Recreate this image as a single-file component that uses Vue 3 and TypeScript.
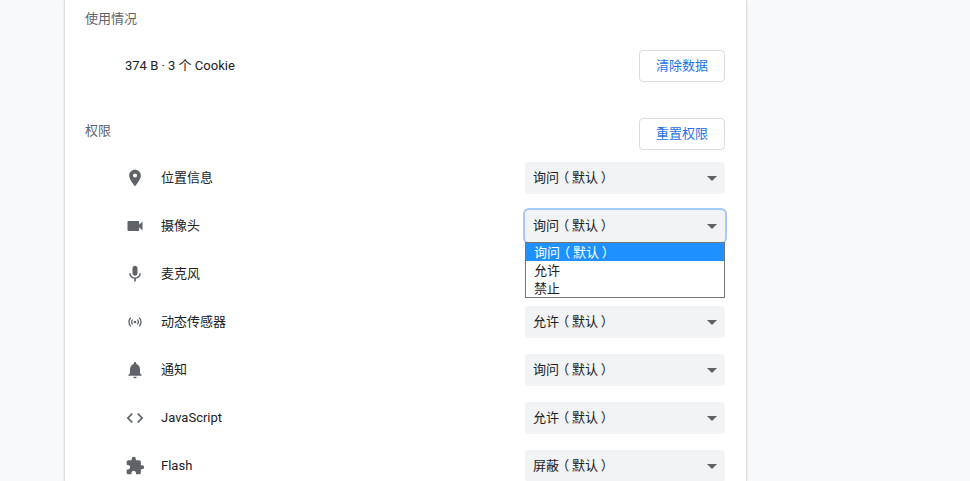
<script setup lang="ts">
interface Perm { name: string; value: string; icon: string; open?: boolean; small?: boolean; covered?: boolean }
const perms: Perm[] = [
  { name: '位置信息', value: '询问', icon: 'M12 2C8.13 2 5 5.13 5 9c0 5.25 7 13 7 13s7-7.75 7-13c0-3.87-3.13-7-7-7zm0 9.5a2.5 2.5 0 0 1 0-5 2.5 2.5 0 0 1 0 5z' },
  { name: '摄像头', value: '询问', open: true, icon: 'M17 10.5V7c0-.55-.45-1-1-1H4c-.55 0-1 .45-1 1v10c0 .55.45 1 1 1h12c.55 0 1-.45 1-1v-3.5l4 4v-11l-4 4z' },
  { name: '麦克风', value: '询问', covered: true, icon: 'M12 14c1.66 0 2.99-1.34 2.99-3L15 5c0-1.66-1.34-3-3-3S9 3.34 9 5v6c0 1.66 1.34 3 3 3zm5.3-3c0 3-2.54 5.1-5.3 5.1S6.7 14 6.7 11H5c0 3.41 2.72 6.23 6 6.72V21h2v-3.28c3.28-.48 6-3.3 6-6.72h-1.7z' },
  { name: '动态传感器', value: '允许', small: true, icon: 'M12 10a2 2 0 1 0 0 4 2 2 0 0 0 0-4zM7.76 16.24A5.98 5.98 0 0 1 6 12c0-1.66.67-3.16 1.76-4.24l1.42 1.42A3.96 3.96 0 0 0 8 12c0 1.1.45 2.1 1.17 2.83l-1.41 1.41zm8.48 0l-1.41-1.41A3.96 3.96 0 0 0 16 12c0-1.1-.45-2.1-1.17-2.83l1.41-1.41A5.98 5.98 0 0 1 18 12c0 1.66-.67 3.16-1.76 4.24zM4.93 19.07A9.97 9.97 0 0 1 2 12c0-2.76 1.12-5.26 2.93-7.07l1.42 1.42A7.97 7.97 0 0 0 4 12c0 2.21.9 4.21 2.35 5.65l-1.42 1.42zm14.14 0l-1.42-1.42A7.97 7.97 0 0 0 20 12c0-2.21-.9-4.21-2.35-5.65l1.42-1.42A9.97 9.97 0 0 1 22 12c0 2.76-1.12 5.26-2.93 7.07z' },
  { name: '通知', value: '询问', icon: 'M12 22c1.1 0 2-.9 2-2h-4c0 1.1.9 2 2 2zm6-6v-5c0-3.07-1.63-5.64-4.5-6.32V4c0-.83-.67-1.5-1.5-1.5s-1.5.67-1.5 1.5v.68C7.64 5.36 6 7.92 6 11v5l-2 2v1h16v-1l-2-2z' },
  { name: 'JavaScript', value: '允许', icon: 'M9.4 16.6L4.8 12l4.6-4.6L8 6l-6 6 6 6 1.4-1.4zm5.2 0l4.6-4.6-4.6-4.6L16 6l6 6-6 6-1.4-1.4z' },
  { name: 'Flash', value: '屏蔽', icon: 'M20.5 11H19V7c0-1.1-.9-2-2-2h-4V3.5a2.5 2.5 0 0 0-5 0V5H4c-1.1 0-1.99.9-1.99 2v3.8H3.5c1.49 0 2.7 1.21 2.7 2.7s-1.21 2.7-2.7 2.7H2V20c0 1.1.9 2 2 2h3.8v-1.5c0-1.49 1.21-2.7 2.7-2.7s2.7 1.21 2.7 2.7V22H17c1.1 0 2-.9 2-2v-4h1.5a2.5 2.5 0 0 0 0-5z' },
]
</script>

<template>
  <div class="page">
    <main class="card">
      <h2 class="heading usage-heading">使用情况</h2>
      <div class="usage">
        <span>374 B · 3 个 Cookie</span>
        <button class="btn">清除数据</button>
      </div>
      <div class="perm-head">
        <h2 class="heading">权限</h2>
        <button class="btn">重置权限</button>
      </div>
      <div v-for="p in perms" :key="p.name" class="row">
        <svg class="icon" :class="{ small: p.small }" viewBox="0 0 24 24"><path :d="p.icon" /></svg>
        <span class="label">{{ p.name }}</span>
        <div class="select-wrap">
          <div v-if="!p.covered" class="select" :class="{ focused: p.open }">
            <span>{{ p.value }}<span class="paren">（</span>默认<span class="paren">）</span></span>
            <i class="arrow"></i>
          </div>
          <ul v-if="p.open" class="menu">
            <li class="active">询问<span class="paren">（</span>默认<span class="paren">）</span></li>
            <li>允许</li>
            <li>禁止</li>
          </ul>
        </div>
      </div>
    </main>
  </div>
</template>

<style>
html, body { margin: 0; overflow: hidden; }
</style>

<style scoped>
.page {
  height: 481px;
  overflow: hidden;
  background: #f8f9fa;
  font: 13px/20px Roboto, "Noto Sans CJK SC", sans-serif;
  color: #202124;
}
.card {
  box-sizing: border-box;
  width: 681px;
  margin-left: 65px;
  height: 481px;
  padding: 0 21px 0 20px;
  background: #fff;
  box-shadow: 0 0 2px rgba(60, 64, 67, .3), 0 1px 3px rgba(60, 64, 67, .15);
}
.heading {
  margin: 0;
  font-size: 13px;
  font-weight: 400;
  color: #5f6368;
  line-height: 20px;
}
.usage-heading { padding-top: 9px; }
.usage {
  display: flex;
  align-items: center;
  justify-content: space-between;
  margin-top: 21px;
  padding-left: 40px;
}
.perm-head {
  display: flex;
  justify-content: space-between;
  align-items: flex-start;
  margin-top: 36px;
  margin-bottom: 4px;
}
.perm-head .heading { margin-top: 3px; }
.btn {
  box-sizing: border-box;
  width: 86px;
  height: 32px;
  padding: 0;
  font: inherit;
  color: #1a73e8;
  background: #fff;
  border: 1px solid #dadce0;
  border-radius: 4px;
}
.row {
  display: flex;
  align-items: center;
  height: 48px;
  padding-left: 40px;
}
.icon { width: 20px; height: 20px; fill: #5f6368; flex: none; }
.icon.small { transform: scale(.8); }
.label { margin-left: 16px; flex: 1; }
.select-wrap { position: relative; width: 200px; height: 32px; }
.select {
  box-sizing: border-box;
  display: flex;
  align-items: center;
  justify-content: space-between;
  height: 32px;
  padding: 0 8px;
  background: #f1f3f4;
  border-radius: 4px;
}
.select.focused { box-shadow: 0 0 0 2px #a6c8fa; }
.paren {
  display: inline-block;
  width: 13px;
  text-align: center;
  font-feature-settings: "palt";
}
.arrow {
  width: 0;
  height: 0;
  border-left: 5px solid transparent;
  border-right: 5px solid transparent;
  border-top: 5px solid #5f6368;
}
.menu {
  box-sizing: border-box;
  position: absolute;
  z-index: 2;
  top: 32px;
  left: 0;
  width: 200px;
  margin: 0;
  padding: 0;
  list-style: none;
  background: #fff;
  border: 1px solid #767676;
  color: #202124;
}
.menu li {
  height: 18px;
  line-height: 20px;
  padding-left: 8px;
  overflow: hidden;
}
.menu li.active { background: #1e90ff; color: #fff; }
</style>
